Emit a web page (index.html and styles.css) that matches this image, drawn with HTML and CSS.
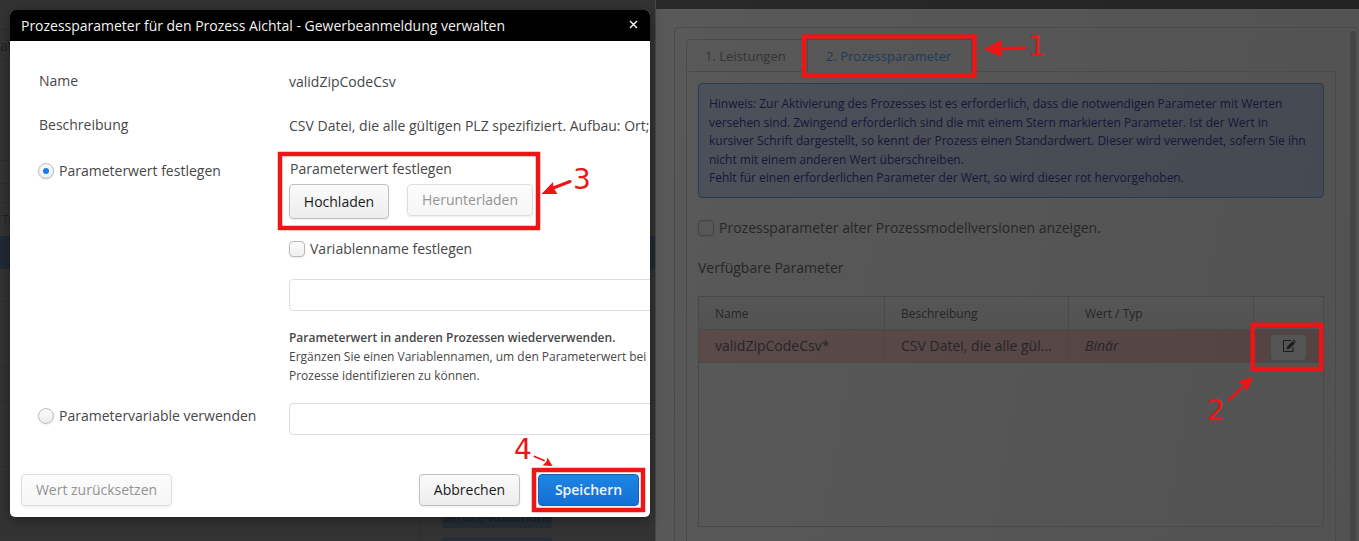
FILE: index.html
```html
<!DOCTYPE html>
<html lang="de">
<head>
<meta charset="utf-8">
<title>Prozessparameter</title>
<link rel="stylesheet" href="styles.css">
</head>
<body>
<div class="app">
  <aside class="list">
    <div class="list-head">at</div>
    <div class="list-gap"></div>
    <div class="list-group"></div>
    <div class="list-cols">Ty</div>
    <div class="list-selected"></div>
    <div class="list-rows"></div>
    <div class="list-tags"><span class="tag">Service-Kommune</span><span class="tag"></span></div>
  </aside>
  <main class="detail">
    <div class="topbar"></div>
    <div class="card">
      <div class="tabsheet">
        <div class="tabs">
          <div class="tab">1. Leistungen</div>
          <div class="tab tab-active">2. Prozessparameter</div>
          <div class="tab-fill"></div>
        </div>
        <div class="tab-body">
          <div class="notice">Hinweis: Zur Aktivierung des Prozesses ist es erforderlich, dass die notwendigen Parameter mit Werten<br>versehen sind. Zwingend erforderlich sind die mit einem Stern markierten Parameter. Ist der Wert in<br>kursiver Schrift dargestellt, so kennt der Prozess einen Standardwert. Dieser wird verwendet, sofern Sie ihn<br>nicht mit einem anderen Wert überschreiben.<br>Fehlt für einen erforderlichen Parameter der Wert, so wird dieser rot hervorgehoben.</div>
          <div class="check-line"><span class="box box-dim"></span>Prozessparameter alter Prozessmodellversionen anzeigen.</div>
          <div class="caption">Verfügbare Parameter</div>
          <div class="table">
            <div class="row row-head"><div>Name</div><div>Beschreibung</div><div>Wert / Typ</div><div></div></div>
            <div class="row row-error"><div>validZipCodeCsv*</div><div>CSV Datei, die alle gül…</div><div><i>Binär</i></div>
              <div class="action"><span class="edit">
                <svg width="14" height="14" viewBox="0 0 14 14"><path d="M9 1.500H1.500v11h9.500V8" fill="none" stroke="#1c1c1c" stroke-width="1"/><path d="M4.500 10.500l.7-3L10.600 2l2.300 2.200-5.500 5.500z" fill="#1c1c1c"/><path d="M11.100 1.500l.8-.8 2 2-.7.9z" fill="#1c1c1c"/></svg>
              </span></div>
            </div>
          </div>
        </div>
      </div>
      <div class="scroll"></div>
    </div>
  </main>
</div>

<section class="dialog">
  <header class="dialog-title"><span>Prozessparameter für den Prozess Aichtal - Gewerbeanmeldung verwalten</span><svg class="close" width="9" height="9" viewBox="0 0 9 9"><path d="M1 1l7 7M8 1L1 8" stroke="#fff" stroke-width="1.400"/></svg></header>
  <div class="form">
    <div class="label l-name">Name</div><div class="value v-name">validZipCodeCsv</div>
    <div class="label l-desc">Beschreibung</div><div class="value v-desc">CSV Datei, die alle gültigen PLZ spezifiziert. Aufbau: Ort;</div>
    <div class="label l-set"><span class="radio checked"></span>Parameterwert festlegen</div>
    <div class="value v-set">
      <div class="upload-caption">Parameterwert festlegen</div>
      <div class="upload"><button class="btn hoch">Hochladen</button><button class="btn disabled herunter" disabled>Herunterladen</button></div>
      <div class="check-line var-check"><span class="box"></span>Variablenname festlegen</div>
      <div class="field"></div>
      <div class="help"><b>Parameterwert in anderen Prozessen wiederverwenden.</b><br>Ergänzen Sie einen Variablennamen, um den Parameterwert bei<br>Prozesse identifizieren zu können.</div>
    </div>
    <div class="label l-use"><span class="radio"></span>Parametervariable verwenden</div>
    <div class="value"><div class="field"></div></div>
  </div>
  <footer class="dialog-foot"><button class="btn disabled reset" disabled>Wert zurücksetzen</button><button class="btn cancel">Abbrechen</button><button class="btn save">Speichern</button></footer>
</section>

<svg class="marks" width="1359" height="541" viewBox="0 0 1359 541">
  <g class="mark-box">
    <rect x="804" y="36.500" width="170.500" height="39"/>
    <rect x="280" y="154" width="258" height="74"/>
    <rect x="1252.700" y="324.800" width="68.500" height="44.200"/>
    <rect x="534" y="470" width="109" height="40"/>
  </g>
  <g class="mark-line">
    <path d="M1025 47.800L998 49"/>
    <path d="M570 181.500L552 188.500"/>
    <path d="M1229 400L1245 385" stroke-width="2.400"/>
    <path d="M534.500 456.500L544 460.500" class="thin"/>
  </g>
  <g class="mark-tip">
    <path d="M984 49L1001 40q2 0 0 8.500q2 8.500 0 8.500z"/>
    <path d="M541.500 194l11.500-12 .500 6 4 6z"/>
    <path d="M1253.500 376.500l-6.500 15-2.500-6.500-7-3z"/>
    <path d="M552.500 466l-5-8.500-1 4-4 4z"/>
  </g>
  <g class="mark-num">
    <text x="1028" y="56">1</text>
    <text x="1207" y="420">2</text>
    <text x="573" y="189">3</text>
    <text x="514" y="459">4</text>
  </g>
</svg>
</body>
</html>
```
FILE: styles.css
```css
* { box-sizing: border-box; }
body {
  margin: 0;
  width: 1359px;
  height: 541px;
  overflow: hidden;
  position: relative;
  background: #333;
  font: 14px/20px "Open Sans", "Noto Sans", sans-serif;
  color: #474747;
  white-space: nowrap;
}
.app { display: flex; height: 541px; }

/* dimmed list behind the dialog */
.list { width: 656px; border-right: 1px solid #464646; color: #222; display: flex; flex-direction: column; padding-top: 29px; }
.list > div { flex: none; }
.list-head { height: 32px; line-height: 31px; border-top: 1px solid #2d2d2d; border-bottom: 1px solid #2d2d2d; }
.list-gap { height: 100px; border-bottom: 1px solid #2d2d2d; }
.list-group { height: 42px; margin-bottom: 0; border-bottom: 1px solid #2d2d2d; background: linear-gradient(#333 0 22px, #2d2d2d 22px 23px, #333 23px); }
.list-cols { height: 33px; line-height: 33px; padding-left: 2px; font-size: 12px; }
.list-selected { height: 33px; background: #202a35; }
.list-rows { height: 240px; background: repeating-linear-gradient(#333 0 32px, #2f2f2f 32px 33px); }
.list-tags { margin-left: 420px; padding-left: 21px; border-left: 1px solid #2d2d2d; display: flex; flex-direction: column; gap: 9px; }
.tag { width: 110px; height: 19px; flex: none; line-height: 17px; background: #252d36; border-radius: 4px; text-align: center; color: #1b2026; font-size: 13px; }

/* dimmed detail view */
.detail { flex: 1; background: linear-gradient(100deg, #595959, #525252); color: #262626; }
.topbar { height: 9px; background: linear-gradient(90deg, #292929, #232323); }
.card { margin: 18px 0 0 18px; height: 530px; border: 1px solid #4a4a4a; border-right: 0; border-radius: 5px; padding: 11px 0 0 11px; display: flex; }
.tabsheet { width: 650px; }
.tabs { display: flex; height: 33px; font-size: 13px; line-height: 32px; color: #333; }
.tab { width: 121px; padding-left: 18px; border: 1px solid #4a4a4a; border-right: 0; border-radius: 5px 0 0 0; }
.tab-active { width: 165px; padding-left: 18px; border-bottom-color: transparent; border-left: 1px solid #4a4a4a; border-right: 1px solid #4a4a4a; border-radius: 0; color: #1f3b5c; }
.tab-fill { flex: 1; border-bottom: 1px solid #4a4a4a; }
.tab-body { height: 480px; border: solid #4a4a4a; border-width: 0 1px; padding: 11px 11px 0; }
.notice { height: 115px; padding: 11px 10px 9px; border: 1px solid #2b3a52; border-radius: 4px; background: linear-gradient(100deg, #4c5059, #454952); color: #171638; font-size: 12px; line-height: 18.600px; letter-spacing: -.01px; }
.check-line { display: flex; align-items: center; gap: 5px; height: 20px; }
.notice + .check-line { margin-top: 20px; }
.box { width: 16px; height: 16px; flex: none; border: 1px solid #b9b9b9; border-radius: 4px; background: linear-gradient(#fafafa, #efefef); box-shadow: 0 1px 2px rgba(0,0,0,.08); }
.box-dim { border-color: #444; background: #575757; }
.caption { margin-top: 20px; height: 20px; }
.table { margin-top: 18px; height: 231px; border: 1px solid #494949; }
.row { display: grid; grid-template-columns: 185px 184px 185px 1fr; height: 33px; line-height: 33px; border-bottom: 1px solid #4a4a4a; }
.row > div { padding-left: 16px; border-left: 1px solid #4a4a4a; }
.row > div:first-child { border-left: 0; }
.row-head { font-size: 12px; background: linear-gradient(#565656, #525252); }
.row-error { background: linear-gradient(90deg, #5b4a4a, #534343); line-height: 32px; }
.row-error > div { border-left-color: #514242; }
.row-error .action { display: flex; align-items: center; }
.edit { width: 37px; height: 27px; margin-top: 3px; border: 1px solid #474747; border-radius: 4px; background: #545454; display: flex; align-items: center; justify-content: center; }
.edit svg { margin-top: -3px; }
.scroll { width: 6px; margin: -8px 0 0 14px; height: 520px; border-radius: 3px; background: #454545; }

/* dialog */
.dialog { position: absolute; left: 10px; top: 10px; width: 640px; height: 507px; border-radius: 5px; background: #fff; overflow: hidden; box-shadow: 0 3px 14px rgba(0,0,0,.35); display: flex; flex-direction: column; }
.dialog-title { height: 31px; padding: 0 12px 0 11px; background: #000; color: #f2f2f2; display: flex; justify-content: space-between; line-height: 32px; letter-spacing: -.015px; }
.close { margin-top: 10px; }
.form { display: grid; grid-template-columns: 250px 361px; grid-template-rows: 44px 46px 248px 1fr; padding: 30px 0 0 29px; height: 424px; }
.value { padding-top: 1px; }
.label { display: flex; height: 20px; }
.l-set, .l-use { gap: 5px; margin-left: -1px; align-items: center; }
.radio { width: 16px; height: 16px; border: 1px solid #bdbdbd; border-radius: 50%; background: linear-gradient(#fafafa, #ededed); display: flex; align-items: center; justify-content: center; box-shadow: 0 1px 2px rgba(0,0,0,.08); }
.checked::after { content: ""; width: 6px; height: 6px; border-radius: 50%; background: #197de1; }
.v-set { margin-top: -3px; }
.upload-caption { padding-left: 1px; height: 25px; }
.upload { height: 35px; display: flex; gap: 18px; align-items: flex-start; }
.btn { font: 14px "Open Sans", "Noto Sans", sans-serif; color: #191919; height: 32px; border: 1px solid #bfbfbf; border-radius: 4px; background: linear-gradient(#fafafa, #ededed); box-shadow: 0 1px 2px rgba(0,0,0,.08); padding: 0 0 1px; }
.disabled { color: #949494; border-color: #dedede; background: linear-gradient(#fcfcfc, #f6f6f6); }
.hoch { width: 100px; height: 35px; padding: 0; }
.herunter { width: 126px; }
.var-check { margin-top: 20px; }
.field { width: 420px; height: 32px; border: 1px solid #dedede; border-radius: 4px; }
.var-check + .field { margin-top: 20px; }
.help { margin-top: 17px; font-size: 12px; line-height: 19px; letter-spacing: -.01px; }
.help b { font-weight: 600; }
.l-use { margin-top: -3px; }
.l-use + .value { padding-top: 0; margin-top: -6px; }
.dialog-foot { display: flex; padding: 9px 11px 0; }
.reset { width: 151px; }
.cancel { width: 101px; margin-left: auto; }
.save { width: 101px; margin-left: 18px; color: #eef5fd; font-weight: 600; border-color: #1362b4; background: linear-gradient(#1b87e3, #166ed5); }

/* numbered callouts */
.marks { position: absolute; left: 0; top: 0; }
.mark-box { fill: none; stroke: #ed1515; stroke-width: 4.500; }
.mark-line { fill: none; stroke: #ed1515; stroke-width: 3; stroke-linecap: round; }
.mark-line .thin { stroke-width: 1.800; }
.mark-tip { fill: #ed1515; }
.mark-num { fill: #ed1515; font: 28px "DejaVu Sans", sans-serif; }
```
